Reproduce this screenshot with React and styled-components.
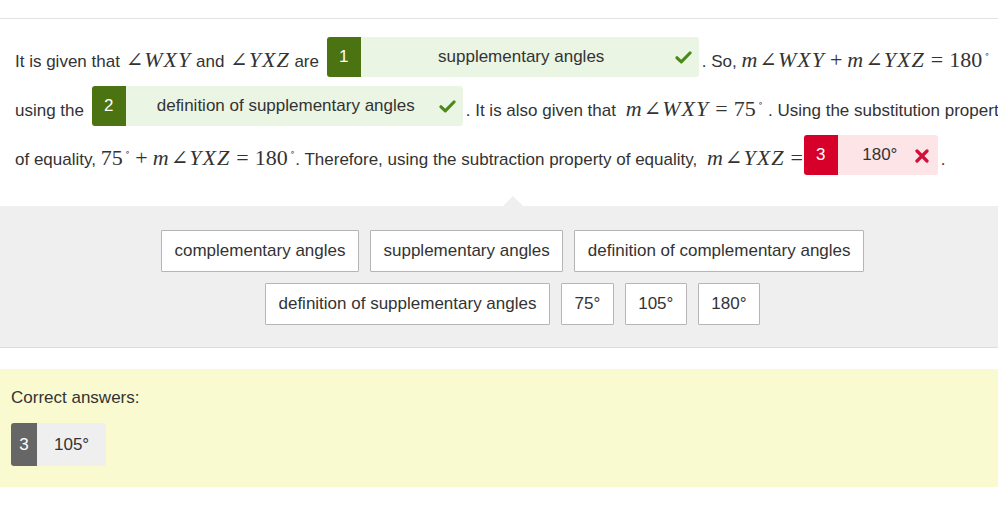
import React from 'react';
import styled, { createGlobalStyle } from 'styled-components';

const GlobalStyle = createGlobalStyle`
  html, body {
    margin: 0;
    padding: 0;
    background: #fff;
    overflow: hidden;
  }
  body {
    font-family: 'Liberation Sans', Arial, sans-serif;
    font-size: 17px;
    color: #333;
  }
`;

const Page = styled.div`
  width: 1025px;
`;

const TopRule = styled.div`
  height: 18px;
  border-bottom: 1px solid #e3e3e3;
`;

const Prompt = styled.p`
  margin: 0;
  padding: 18px 15px 0;
  line-height: 48px;
`;

const MathSpan = styled.span`
  font-family: 'Liberation Serif', 'Times New Roman', serif;
  font-size: 22px;
  line-height: 1;
  white-space: nowrap;
  margin: ${p => p.$gap || '0'};
`;

const Var = styled.i`
  font-style: italic;
  margin-right: 1px;
`;

const Angle = styled.span`
  font-family: 'DejaVu Serif', serif;
  font-size: 21px;
  margin: 0 1px;
`;

const Op = styled.span`
  margin: 0 ${p => (p.$end ? '0' : p.$rel ? '6px' : '5px')} 0 ${p => (p.$rel ? '6px' : '5px')};
`;

const Deg = styled.sup`
  font-family: 'DejaVu Sans', sans-serif;
  font-size: 9px;
  vertical-align: 10px;
  margin-left: 2px;
`;

const Blank = styled.span`
  display: inline-flex;
  vertical-align: 5px;
  height: 40px;
  width: ${p => p.$width}px;
  margin: 0 3px 0 ${p => (p.$flush ? '1px' : '3px')};
  border-radius: 3px;
  overflow: hidden;
  background: ${p => (p.$ok ? '#ebf5e4' : '#fde4e7')};
  line-height: 40px;
`;

const BlankNum = styled.span`
  width: 34px;
  flex: none;
  text-align: center;
  color: #fff;
  background: ${p => (p.$ok ? '#4b7312' : '#d6002b')};
`;

const BlankLabel = styled.span`
  flex: 1;
  text-align: center;
  padding-left: 7px;
  white-space: nowrap;
`;

const Mark = styled.span`
  flex: none;
  display: flex;
  align-items: center;
  margin-right: ${p => (p.$ok ? '7px' : '9px')};
  padding-top: ${p => (p.$ok ? '0' : '2px')};
`;

const Tray = styled.div`
  position: relative;
  margin-top: 22px;
  padding: 24px 0 22px;
  background: #efefef;
  border-bottom: 1px solid #dcdcdc;
  display: flex;
  flex-direction: column;
  align-items: center;
  gap: 11px;

  &::before {
    content: '';
    position: absolute;
    top: -10px;
    left: calc(50% - 10px);
    border-left: 10px solid transparent;
    border-right: 10px solid transparent;
    border-bottom: 10px solid #efefef;
  }
`;

const TrayRow = styled.div`
  display: flex;
  gap: 11px;
`;

const Choice = styled.button`
  height: 42px;
  padding: 0 12.5px;
  border: 1px solid #b5b5b5;
  border-radius: 1px;
  background: #fff;
  font-family: 'Liberation Sans', Arial, sans-serif;
  font-size: 17px;
  color: #333;
  cursor: pointer;
`;

const Feedback = styled.div`
  margin-top: 21px;
  padding: 20px 11px 21px;
  background: #fafad0;
`;

const FeedbackTitle = styled.div`
  line-height: 18px;
  margin-bottom: 16px;
`;

const AnswerChip = styled.div`
  display: inline-flex;
  height: 43px;
  line-height: 43px;
  border-radius: 3px;
  overflow: hidden;
  background: #efefef;
`;

const ChipNum = styled.span`
  width: 26px;
  text-align: center;
  color: #fff;
  background: #666;
`;

const ChipValue = styled.span`
  padding: 0 17px;
`;

const CheckIcon = () => (
  <svg width="17" height="13" viewBox="0 0 17 13">
    <path d="M2 6.8 L6.3 10.8 L15 2" fill="none" stroke="#4b8a1a" strokeWidth="3.2" strokeLinecap="round" strokeLinejoin="round" />
  </svg>
);

const CrossIcon = () => (
  <svg width="14" height="14" viewBox="0 0 14 14">
    <path d="M2 2 L12 12 M12 2 L2 12" fill="none" stroke="#d0103a" strokeWidth="3.2" strokeLinecap="round" />
  </svg>
);

const Ang = ({ name }) => (
  <>
    <Angle>∠</Angle>
    {name.split('').map((c, i) => <Var key={i}>{c}</Var>)}
  </>
);

const Measure = ({ name }) => (
  <>
    <Var>m</Var>
    <Ang name={name} />
  </>
);

const Degrees = ({ n }) => (
  <>
    {n}
    <Deg>∘</Deg>
  </>
);

function Blanked({ num, label, ok, width, flush }) {
  return (
    <Blank $ok={ok} $width={width} $flush={flush}>
      <BlankNum $ok={ok}>{num}</BlankNum>
      <BlankLabel>{label}</BlankLabel>
      <Mark $ok={ok}>{ok ? <CheckIcon /> : <CrossIcon />}</Mark>
    </Blank>
  );
}

const rowOne = ['complementary angles', 'supplementary angles', 'definition of complementary angles'];
const rowTwo = ['definition of supplementary angles', '75°', '105°', '180°'];

export default function App() {
  return (
    <Page>
      <GlobalStyle />
      <TopRule />
      <Prompt>
        It is given that <MathSpan><Ang name="WXY" /></MathSpan> and{' '}
        <MathSpan><Ang name="YXZ" /></MathSpan> are{' '}
        <Blanked num="1" label="supplementary angles" ok width={372} />. So,{' '}
        <MathSpan>
          <Measure name="WXY" />
          <Op>+</Op>
          <Measure name="YXZ" />
          <Op $rel>=</Op>
          <Degrees n="180" />
        </MathSpan>{' '}
        using the <Blanked num="2" label="definition of supplementary angles" ok width={371} />. It is also given that{' '}
        <MathSpan $gap="0 0 0 5px">
          <Measure name="WXY" />
          <Op $rel>=</Op>
          <Degrees n="75" />
        </MathSpan>{' '}
        . Using the substitution property of equality,{' '}
        <MathSpan>
          <Degrees n="75" />
          <Op>+</Op>
          <Measure name="YXZ" />
          <Op $rel>=</Op>
          <Degrees n="180" />
        </MathSpan>
        . Therefore, using the subtraction property of equality,{' '}
        <MathSpan $gap="0 0 0 5px">
          <Measure name="YXZ" />
          <Op $rel $end>=</Op>
        </MathSpan>
        <Blanked num="3" label="180°" width={134} flush />.
      </Prompt>

      <Tray>
        <TrayRow>
          {rowOne.map(t => <Choice key={t}>{t}</Choice>)}
        </TrayRow>
        <TrayRow>
          {rowTwo.map(t => <Choice key={t}>{t}</Choice>)}
        </TrayRow>
      </Tray>

      <Feedback>
        <FeedbackTitle>Correct answers:</FeedbackTitle>
        <AnswerChip>
          <ChipNum>3</ChipNum>
          <ChipValue>105°</ChipValue>
        </AnswerChip>
      </Feedback>
    </Page>
  );
}
